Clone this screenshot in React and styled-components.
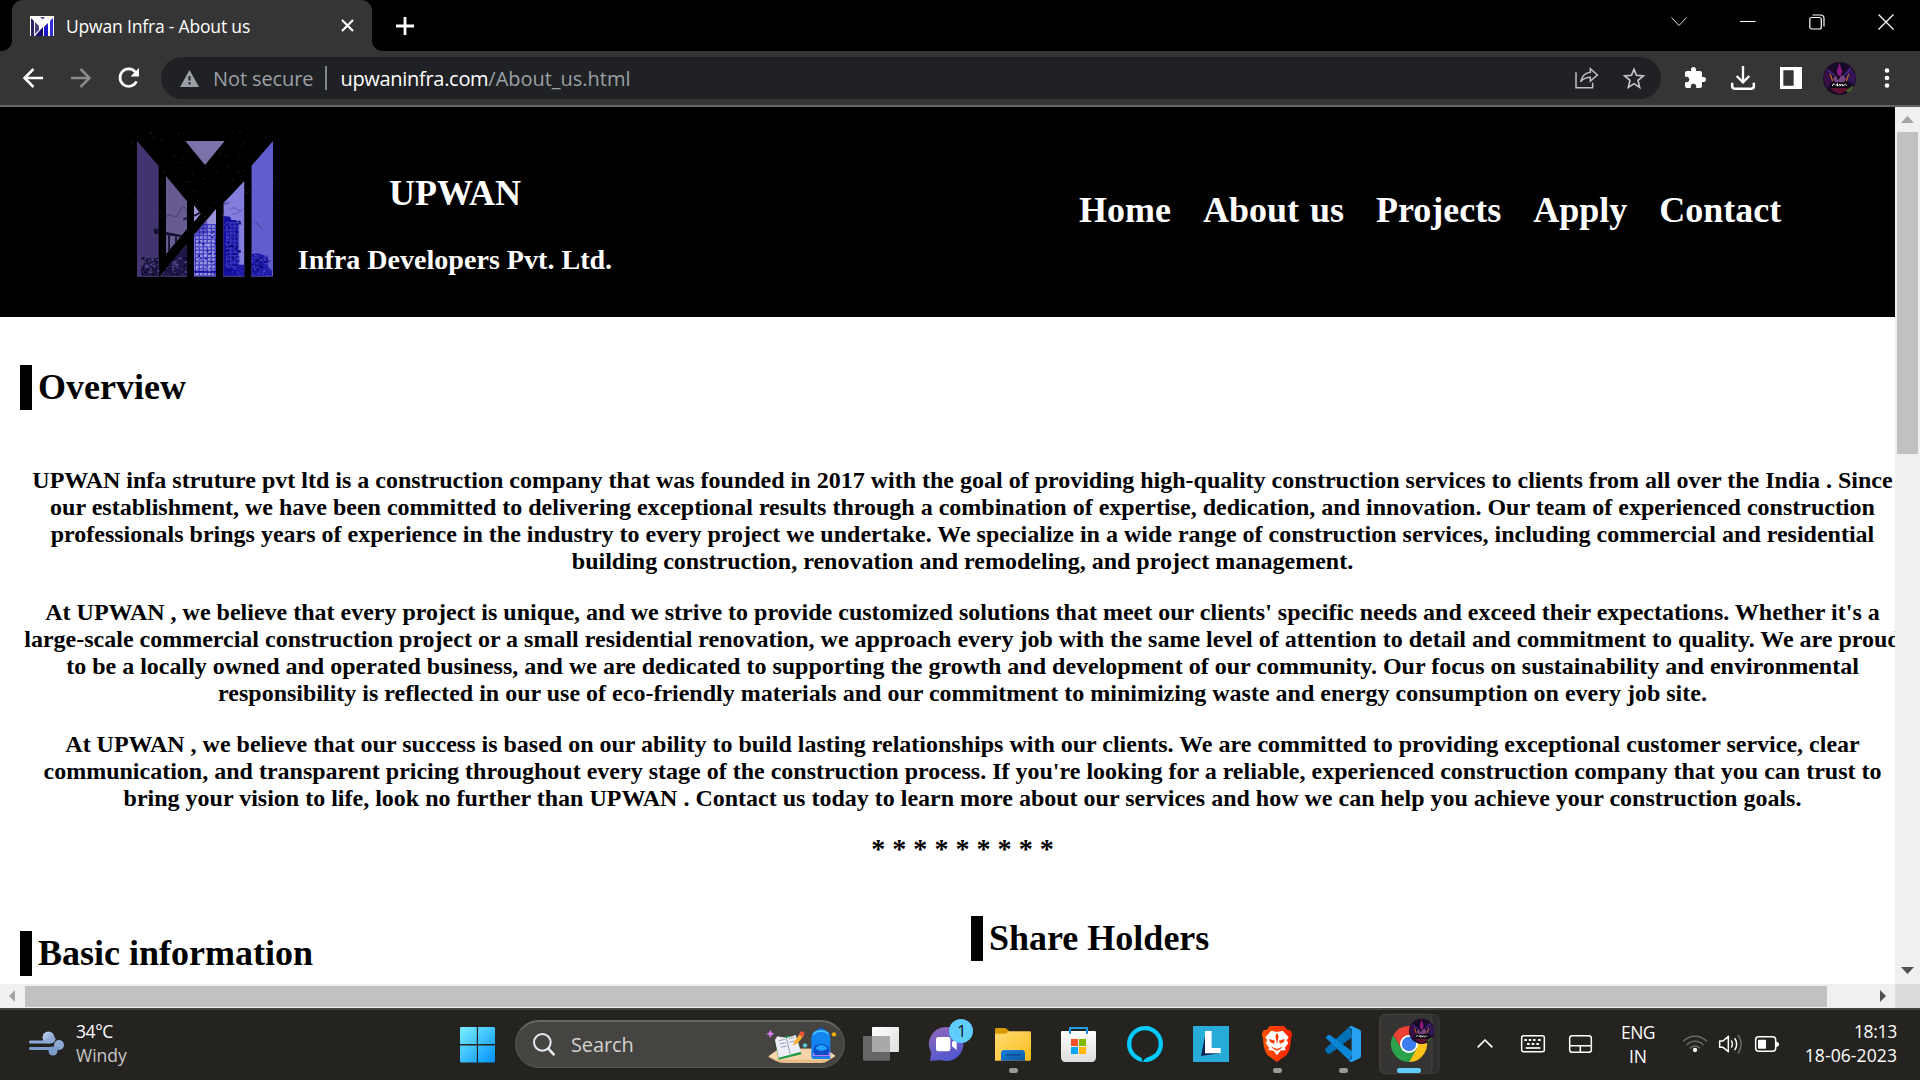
import React from "react";
import styled, { createGlobalStyle } from "styled-components";

const Global = createGlobalStyle`
  * { box-sizing: border-box; }
  html, body { margin: 0; padding: 0; background: #000; overflow: hidden; }
`;

const ui = `"Open Sans", "Noto Sans", sans-serif`;
const serif = `"Liberation Serif", "Times New Roman", serif`;

const Screen = styled.div`
  width: 1920px;
  height: 1080px;
  display: flex;
  flex-direction: column;
  overflow: hidden;
  font-family: ${ui};
`;

/* ---------- browser chrome ---------- */
const TabStrip = styled.div`
  height: 51px;
  flex: none;
  display: flex;
  background: #000;
  padding-left: 12px;
`;
const Tab = styled.div`
  position: relative;
  width: 360px;
  height: 51px;
  padding: 0 18px;
  border-radius: 11px 11px 0 0;
  background: #353535;
  display: flex;
  align-items: center;
  color: #fff;
  &::before, &::after {
    content: "";
    position: absolute;
    bottom: 0;
    width: 10px;
    height: 10px;
  }
  &::before { left: -10px; background: radial-gradient(circle at 0 0, transparent 9.5px, #353535 10px); }
  &::after { right: -10px; background: radial-gradient(circle at 100% 0, transparent 9.5px, #353535 10px); }
`;
const UiText = styled.span`
  font-family: ${ui};
  font-size: ${(p) => p.$size || 18}px;
  letter-spacing: ${(p) => p.$ls || 0}px;
  color: ${(p) => p.$color || "#fff"};
  margin-left: ${(p) => p.$ml || 0}px;
  padding-top: ${(p) => p.$pt || 0}px;
  line-height: ${(p) => p.$lh || 24}px;
  white-space: pre;
`;
const Icon = styled.svg`
  display: block;
  flex: none;
  overflow: visible;
  width: ${(p) => p.$w}px;
  height: ${(p) => p.$h}px;
  margin-left: ${(p) => p.$ml || 0}px;
  margin-top: ${(p) => p.$mt || 0}px;
`;
const WindowButtons = styled.div`
  margin-left: auto;
  display: flex;
  align-items: center;
  gap: 53px;
  height: 43px;
  padding-right: 26px;
`;
const Toolbar = styled.div`
  height: 56px;
  flex: none;
  display: flex;
  align-items: center;
  background: #353535;
  border-bottom: 2px solid #666;
  padding: 0 27px 0 22px;
`;
const AddressBar = styled.div`
  width: 1500px;
  height: 42px;
  margin-left: 21px;
  border-radius: 21px;
  background: #202124;
  display: flex;
  align-items: center;
  padding: 0 16px 0 18px;
`;
const Divider = styled.div`
  width: 2px;
  height: 24px;
  background: #80868b;
  margin: 0 13px 0 12px;
`;
const Push = styled.div`flex: 1;`;

/* ---------- page ---------- */
const Viewport = styled.div`
  height: 901px;
  flex: none;
  display: grid;
  grid-template-columns: 1895px 25px;
  grid-template-rows: 877px 24px;
  background: #dcdcdc;
`;
const Page = styled.div`
  overflow: hidden;
  background: #fff;
  color: #000;
  font-family: ${serif};
  font-weight: bold;
`;
const Header = styled.header`
  height: 210px;
  background: #000;
  color: #fff;
  display: flex;
  padding-left: 120px;
`;
const Brand = styled.div`
  width: 314px;
  margin-left: 8px;
  display: flex;
  flex-direction: column;
  align-items: center;
  padding-top: 66px;
  white-space: nowrap;
`;
const BrandName = styled.div`
  font-size: 36px;
  line-height: 41px;
`;
const BrandSub = styled.div`
  font-size: 28.08px;
  line-height: 32px;
  margin-top: 30px;
`;
const Nav = styled.nav`
  display: flex;
  margin-left: 467px;
  padding-top: 83px;
  gap: 32px;
  font-size: 36px;
  line-height: 41px;
  word-spacing: 2px;
  white-space: nowrap;
`;
const SectionTitle = styled.h2`
  margin: 0;
  height: 45px;
  border-left: 12px solid #000;
  padding-left: 6px;
  font-size: 36px;
  line-height: 45px;
  white-space: nowrap;
`;
const Overview = styled.section`
  padding: 48px 0 0 20px;
`;
const Story = styled.div`
  width: 1925px;
  margin-top: 57px;
  display: flex;
  flex-direction: column;
  align-items: center;
  gap: 24px;
`;
const Paragraph = styled.p`
  margin: 0;
  font-size: 24px;
  line-height: 27px;
  text-align: center;
  white-space: nowrap;
`;
const Stars = styled.div`
  font-size: 28.08px;
  line-height: 32px;
  margin-top: -3px;
`;
const Columns = styled.div`
  display: grid;
  grid-template-columns: 951px 1fr;
  padding: 51px 0 0 20px;
`;
const Column = styled.div`
  padding-top: ${(p) => p.$top || 0}px;
`;

/* ---------- scrollbars ---------- */
const VScroll = styled.div`
  background: #f0f0f0;
  display: flex;
  flex-direction: column;
  align-items: center;
  padding-right: 1px;
`;
const VThumb = styled.div`
  width: 21px;
  height: 322px;
  background: #c1c1c1;
  margin-top: 9px;
`;
const HScroll = styled.div`
  background: #f0f0f0;
  display: flex;
  align-items: center;
`;
const HThumb = styled.div`
  width: 1802px;
  height: 21px;
  background: #c1c1c1;
  margin-left: 10px;
`;

/* ---------- taskbar ---------- */
const Taskbar = styled.div`
  height: 72px;
  flex: none;
  display: flex;
  background: #252320;
  border-top: 2px solid #42433f;
`;
const Weather = styled.div`
  width: 432px;
  display: flex;
  padding-left: 29px;
`;
const TwoLines = styled.div`
  display: flex;
  flex-direction: column;
  align-items: ${(p) => p.$align || "flex-start"};
  margin-left: ${(p) => p.$ml || 0}px;
  width: ${(p) => (p.$w ? p.$w + "px" : "auto")};
  padding-top: ${(p) => p.$top || 9}px;
`;
const SearchBox = styled.div`
  width: 330px;
  height: 48px;
  margin: 10px 3px 0 20px;
  border-radius: 24px;
  background: #454441;
  border: 1px solid #555451;
  border-top: 2px solid #676663;
  display: flex;
  align-items: center;
  padding-left: 17px;
`;
const Apps = styled.div`
  display: flex;
`;
const Tray = styled.div`
  display: flex;
  flex: 1;
`;

const Cell = ({ x, w = 66, children }) => (
  <Icon $w={w} $h={70} viewBox={`${x} 30 ${w * 3} 210`}>{children}</Icon>
);
const TrayCell = ({ x, w, children }) => (
  <Icon $w={w} $h={70} viewBox={`${x} 150 ${w * 3} 210`} fill="none" stroke="#fff" strokeWidth="4.5" strokeLinecap="round" strokeLinejoin="round">
    {children}
  </Icon>
);

const rand = (seed) => {
  let s = seed;
  return () => (s = (s * 16807) % 2147483647) / 2147483647;
};
const specks = (() => {
  const r = rand(77);
  return Array.from({ length: 110 }, () => [34 + r() * 445, 32 + r() * 260, r() * 0.3 + 0.1]);
})();
const grain = (x0, y0, x1, y1, n, seed) => {
  const r = rand(seed);
  return Array.from({ length: n }, () => [x0 + r() * (x1 - x0), y0 + r() * (y1 - y0), 3 + r() * 6, 2 + r() * 4]);
};

function Logo() {
  const tower = (x, top, w, bottom, color, key) => {
    const rows = [];
    for (let y = top; y < bottom; y += 11) rows.push(<rect key={key + y} x={x} y={y} width={w} height="4" fill={color} />);
    for (let c = x; c < x + w; c += 12) rows.push(<rect key={key + "c" + c} x={c} y={top} width="4" height={bottom - top} fill={color} />);
    return rows;
  };
  return (
    <Icon $w={170} $h={170} $mt={13} viewBox="0 0 510 510">
      <defs>
        <clipPath id="panes">
          <path d="M51 63L116 138V470H51ZM138 168L201 244V327L138 402ZM201 371V470H119ZM222 256L242 282L222 305ZM288 267V470H222V345ZM310 250L373 183V470H310ZM394 138L459 63V470H394ZM96 470L118 440V470Z" />
        </clipPath>
      </defs>
      {specks.map(([x, y, o], i) => <rect key={i} x={x} y={y} width="3" height="3" fill="#9a9aa8" opacity={o} />)}
      <path d="M196 63H314L255 135Z" fill="#7a72a8" />
      <g clipPath="url(#panes)">
        <rect x="51" y="60" width="66" height="410" fill="#42356f" />
        <rect x="138" y="160" width="64" height="310" fill="#685b91" />
        <rect x="222" y="250" width="67" height="220" fill="#9a94da" />
        <rect x="310" y="180" width="64" height="290" fill="#837ddb" />
        <rect x="394" y="60" width="66" height="410" fill="#625dce" />
        <path d="M138 290Q150 280 160 289T180 272T200 274M405 305L426 326M312 252L328 248" fill="none" stroke="#39326f" strokeWidth="2.5" />
        <path d="M330 270Q340 258 352 268T368 265M334 282Q350 286 360 274" fill="none" stroke="#544fb8" strokeWidth="2.5" />
        <path d="M100 326H118V342H104ZM138 336L200 348V354L138 345Z" fill="#151032" />
        <path d="M147 345V400M168 350V390M190 298L230 284L240 278" stroke="#1e173c" strokeWidth="6" />
        <path d="M62 450L80 414H116V470H66Z" fill="#211847" />
        <path d="M119 470V440L138 425L160 415L201 371V470Z" fill="#1d1748" />
        <g opacity="0.75">{tower(224, 312, 66, 470, "#2824bc", "a")}</g>
        <path d="M222 330L245 312L262 300V340L222 350Z" fill="#15109a" opacity="0.4" />
        <path d="M310 288L330 290L334 300H348L356 312V470H310Z" fill="#1510a0" />
        <g opacity="0.5">{tower(318, 306, 38, 440, "#5b57d0", "b")}</g>
        <rect x="350" y="434" width="24" height="36" fill="#2019a8" />
        <path d="M394 402L415 400L444 410V440L456 452V470H394Z" fill="#211caa" />
        <rect x="222" y="452" width="66" height="6" fill="#1a14a6" />
        {grain(64, 410, 201, 466, 90, 5).map(([x, y, w, h], i) => <rect key={i} x={x} y={y} width={w} height={h} fill={i % 2 ? "#54488a" : "#0a0620"} />)}
        {grain(222, 330, 288, 466, 50, 31).map(([x, y, w, h], i) => <rect key={i} x={x} y={y} width={w} height={h} fill={i % 2 ? "#1b16a4" : "#a9a4ea"} />)}
        {grain(310, 300, 356, 466, 70, 9).map(([x, y, w, h], i) => <rect key={i} x={x} y={y} width={w} height={h} fill={i % 2 ? "#0a0670" : "#3c36c4"} />)}
        {grain(394, 404, 444, 466, 50, 15).map(([x, y, w, h], i) => <rect key={i} x={x} y={y} width={w} height={h} fill={i % 2 ? "#0b0775" : "#4a45c8"} />)}
        <path d="M51 469H459" stroke="#5a5490" strokeWidth="3" />
      </g>
    </Icon>
  );
}

const AvatarArt = ({ cx, cy, r, id }) => (
  <g>
    <clipPath id={id}><circle cx={cx} cy={cy} r={r} /></clipPath>
    <g clipPath={`url(#${id})`}>
      <g transform={`translate(${cx} ${cy}) scale(${r / 50})`}>
        <rect x="-50" y="-50" width="100" height="100" fill="#180a28" />
        <path d="M-50 -10L-34 -30L-20 10L-40 30Z" fill="#3a0f44" />
        <path d="M50 -10L30 -36L18 0L44 20Z" fill="#331556" />
        <path d="M-8 -22L0 -48L8 -22L3 -8H-4Z" fill="#8c1a80" />
        <path d="M-36 -26L-16 -10M34 -30L14 -10" stroke="#45258c" strokeWidth="5" />
        <path d="M-28 -14L-21 8M28 -14L21 8" stroke="#c86e1e" strokeWidth="3.500" />
        <path d="M-20 2L-12 -10L-4 6L4 -8L12 -10L20 2L12 12H-12Z" fill="#7a4580" />
        <path d="M-30 32L0 48L30 32L10 26H-10Z" fill="#5e1030" />
        <path d="M20 36L40 22L46 34L28 46Z" fill="#3f6420" />
        <rect x="-26" y="11" width="52" height="18" rx="4" fill="#08030c" />
        <path d="M-22 23Q-20 13 -14 17M-12 23L-6 15L-6 23L2 17V23L8 17L10 23L18 17L22 22" stroke="#eee" strokeWidth="3" fill="none" />
      </g>
    </g>
  </g>
);

function Chrome() {
  return (
    <>
      <TabStrip>
        <Tab>
          <Icon $w={24} $h={20} viewBox="0 0 24 20">
            <rect width="24" height="20" fill="#fff" />
            <path d="M1 2L4 5V20H1Z" fill="#2b1f66" />
            <path d="M5 6L9 10V14L5 18Z" fill="#4a3f7c" />
            <path d="M5 20L13 11V20Z" fill="#140c70" />
            <path d="M14 11L18 7V20H14Z" fill="#1d15c8" />
            <path d="M20 5L23 2V20H20Z" fill="#342ed0" />
            <path d="M10 1H15L12.500 3.500Z" fill="#554c9c" />
          </Icon>
          <UiText $size={17.5} $ls={-0.18} $ml={12}>Upwan Infra - About us</UiText>
          <Push />
          <Icon $w={13} $h={13} viewBox="0 0 13 13" stroke="#fff" strokeWidth="2.200"><path d="M1 1L12 12M12 1L1 12" /></Icon>
        </Tab>
        <Icon $w={18} $h={18} $ml={24} $mt={17} viewBox="0 0 18 18" stroke="#fff" strokeWidth="2.800"><path d="M9 0V18M0 9H18" /></Icon>
        <WindowButtons>
          <Icon $w={16} $h={10} viewBox="0 0 16 10" fill="none" stroke="#ddd" strokeWidth="1"><path d="M.5 .5L8 8.500L15.500 .5" /></Icon>
          <Icon $w={16} $h={16} viewBox="0 0 16 16" stroke="#fff" strokeWidth="1.100"><path d="M0 7.500H15.500" /></Icon>
          <Icon $w={16} $h={16} viewBox="0 0 16 16" fill="none" stroke="#fff" strokeWidth="1.200">
            <rect x=".8" y="3.500" width="11.500" height="11.500" rx="2" /><path d="M3.500 1H11.500Q15 1 15 4.500V12.500" />
          </Icon>
          <Icon $w={16} $h={16} viewBox="0 0 16 16" stroke="#fff" strokeWidth="1.200"><path d="M.5 .5L15.500 15.500M15.500 .5L.5 15.500" /></Icon>
        </WindowButtons>
      </TabStrip>
      <Toolbar>
        <Icon $w={21} $h={20} viewBox="0 0 21 20" fill="none" stroke="#fff" strokeWidth="2.500"><path d="M21 10H2.500M11.500 1L2.500 10L11.500 19" /></Icon>
        <Icon $w={21} $h={20} $ml={28} viewBox="0 0 21 20" fill="none" stroke="#8a8a8a" strokeWidth="2.500"><path d="M0 10H18.500M9.500 1L18.500 10L9.500 19" /></Icon>
        <Icon $w={22} $h={22} $ml={26} viewBox="0 0 22 22" fill="none" stroke="#fff" strokeWidth="2.700">
          <path d="M18.500 14.500A8.700 8.700 0 1 1 17.500 5.200L19.500 7.500" /><path d="M21 1V9.500H12.500Z" fill="#fff" stroke="none" />
        </Icon>
        <AddressBar style={undefined}>
          <Icon $w={19} $h={17} $ml={1} viewBox="0 0 19 17"><path d="M9.500 0L19 17H0Z" fill="#9aa0a6" /><path d="M8.500 6H10.500V10.500H8.500ZM8.500 12.300H10.500V14.500H8.500Z" fill="#202124" /></Icon>
          <UiText $size={20} $ls={-0.1} $ml={14} $pt={1} $color="#9aa0a6">Not secure</UiText>
          <Divider />
          <UiText $size={20} $ls={-0.3} $pt={1}>upwaninfra.com</UiText>
          <UiText $size={20} $ls={-0.02} $pt={1} $color="#9aa0a6">/About_us.html</UiText>
          <Push />
          <Icon $w={24} $h={22} viewBox="167 203 72 66" fill="none" stroke="#bdbfc1" strokeWidth="4.500">
            <path d="M170 219V265H220V250" /><path d="M184 247C188 230 196 221 213 219V208L234 227L213 245V234C200 234 192 238 184 247Z" />
          </Icon>
          <Icon $w={22} $h={22} $ml={24} viewBox="313 201 64 66" fill="none" stroke="#c4c6c8" strokeWidth="5"><path d="M345 208L352.500 226L373 228L357 241L362 262L345 251L328 262L333 241L317 228L337.500 226Z" /></Icon>
        </AddressBar>
        <Icon $w={24} $h={24} $ml={22} viewBox="0 0 24 24" fill="#fff"><path d="M20.500 11H19V7c0-1.100-.9-2-2-2h-4V3.500a2.500 2.500 0 0 0-5 0V5H4c-1.100 0-2 .9-2 2v3.800h1.500a2.700 2.700 0 0 1 0 5.400H2V20c0 1.100.9 2 2 2h3.800v-1.500a2.700 2.700 0 0 1 5.400 0V22H17c1.100 0 2-.9 2-2v-4h1.500a2.500 2.500 0 0 0 0-5z" /></Icon>
        <Icon $w={24} $h={24} $ml={24} viewBox="633 198 72 72" fill="none" stroke="#fff" strokeWidth="7"><path d="M669 198V245M650 228L669 247L688 228" /><path d="M636.500 248V259Q636.500 266 644 266H694Q701.500 266 701.500 259V248" strokeWidth="7.500" /></Icon>
        <Icon $w={22} $h={22} $ml={25} viewBox="780 201 66 66"><path d="M780 201H846V267H780ZM790 211V257H821V211Z" fill="#fff" fillRule="evenodd" /></Icon>
        <Icon $w={33} $h={33} $ml={21} viewBox="0 0 100 100"><AvatarArt cx={50} cy={50} r={50} id="av1" /></Icon>
        <Icon $w={6} $h={20} $ml={28} viewBox="0 0 6 20" fill="#fff"><circle cx="3" cy="2.500" r="2.300" /><circle cx="3" cy="10" r="2.300" /><circle cx="3" cy="17.500" r="2.300" /></Icon>
      </Toolbar>
    </>
  );
}

function Website() {
  return (
    <Page>
      <Header>
        <Logo />
        <Brand>
          <BrandName>UPWAN</BrandName>
          <BrandSub>Infra Developers Pvt. Ltd.</BrandSub>
        </Brand>
        <Nav>
          <span>Home</span><span>About us</span><span>Projects</span><span>Apply</span><span>Contact</span>
        </Nav>
      </Header>
      <Overview>
        <SectionTitle>Overview</SectionTitle>
      </Overview>
      <Story>
        <Paragraph>
          UPWAN infa struture pvt ltd is a construction company that was founded in 2017 with the goal of providing high-quality construction services to clients from all over the India . Since<br />
          our establishment, we have been committed to delivering exceptional results through a combination of expertise, dedication, and innovation. Our team of experienced construction<br />
          professionals brings years of experience in the industry to every project we undertake. We specialize in a wide range of construction services, including commercial and residential<br />
          building construction, renovation and remodeling, and project management.
        </Paragraph>
        <Paragraph>
          At UPWAN , we believe that every project is unique, and we strive to provide customized solutions that meet our clients' specific needs and exceed their expectations. Whether it's a<br />
          large-scale commercial construction project or a small residential renovation, we approach every job with the same level of attention to detail and commitment to quality. We are proud<br />
          to be a locally owned and operated business, and we are dedicated to supporting the growth and development of our community. Our focus on sustainability and environmental<br />
          responsibility is reflected in our use of eco-friendly materials and our commitment to minimizing waste and energy consumption on every job site.
        </Paragraph>
        <Paragraph>
          At UPWAN , we believe that our success is based on our ability to build lasting relationships with our clients. We are committed to providing exceptional customer service, clear<br />
          communication, and transparent pricing throughout every stage of the construction process. If you're looking for a reliable, experienced construction company that you can trust to<br />
          bring your vision to life, look no further than UPWAN . Contact us today to learn more about our services and how we can help you achieve your construction goals.
        </Paragraph>
        <Stars>* * * * * * * * *</Stars>
      </Story>
      <Columns>
        <Column $top={15}><SectionTitle>Basic information</SectionTitle></Column>
        <Column><SectionTitle>Share Holders</SectionTitle></Column>
      </Columns>
    </Page>
  );
}

function TaskbarApps() {
  return (
    <Apps>
      <Cell x={1044}>
        <defs><linearGradient id="tv" x2="1" y2="1"><stop stopColor="#fff" /><stop offset="1" stopColor="#dedede" /></linearGradient></defs>
        <rect x="1116" y="81" width="81" height="75" rx="3" fill="url(#tv)" />
        <rect x="1089" y="108" width="81" height="74" rx="3" fill="#6d6d6c" opacity=".92" />
        <path d="M1116 108H1170V156H1119Q1116 156 1116 153Z" fill="#a9a9a9" />
      </Cell>
      <Cell x={1242}>
        <defs><linearGradient id="ch" x2=".4" y2="1"><stop stopColor="#9169b8" /><stop offset="1" stopColor="#5558cf" /></linearGradient></defs>
        <path d="M1338 81A51 51 0 1 1 1322 180L1290 183L1294 158A51 51 0 0 1 1338 81Z" fill="url(#ch)" />
        <rect x="1308" y="111" width="43" height="43" rx="7" fill="#fff" />
        <path d="M1356 126L1370 116V150L1356 139Z" fill="#fff" />
        <circle cx="1383" cy="93" r="36" fill="#60cdff" />
        <text x="1385" y="110" fontSize="50" textAnchor="middle" fill="#111" fontFamily='"Open Sans", sans-serif'>1</text>
      </Cell>
      <Cell x={60}>
        <defs>
          <linearGradient id="fo" x2="1" y2="1"><stop stopColor="#ffdc73" /><stop offset="1" stopColor="#fbbc1c" /></linearGradient>
          <linearGradient id="fb" x2="1" y2="1"><stop stopColor="#1781dd" /><stop offset="1" stopColor="#1056a0" /></linearGradient>
        </defs>
        <path d="M105 88Q105 84 109 84H136L148 93V104H105Z" fill="#d99a00" />
        <path d="M105 101H136L148 94H209Q213 94 213 98V178Q213 182 209 182H105Z" fill="url(#fo)" />
        <path d="M123 182V160Q123 150 133 150H185Q195 150 195 160V182Z" fill="url(#fb)" />
        <path d="M139 165H179" stroke="#0d4a8c" strokeWidth="4" strokeLinecap="round" />
        <rect x="147" y="204" width="27" height="15" rx="7" fill="#9b9a98" />
      </Cell>
      <Cell x={258}>
        <defs><linearGradient id="st" x2="0" y2="1"><stop stopColor="#fff" /><stop offset="1" stopColor="#dcdcdc" /></linearGradient></defs>
        <path d="M330 100V84H381V100" fill="none" stroke="#1fa0e4" strokeWidth="6" />
        <path d="M303 97Q303 93 307 93H404Q408 93 408 97V172Q408 186 394 186H317Q303 186 303 172Z" fill="url(#st)" />
        <path d="M330 93V101M381 93V101" stroke="#1583cc" strokeWidth="6" />
        <rect x="333" y="117" width="21" height="21" fill="#f25022" /><rect x="357" y="117" width="21" height="21" fill="#7fba00" />
        <rect x="333" y="141" width="21" height="21" fill="#00a4ef" /><rect x="357" y="141" width="21" height="21" fill="#ffb900" />
      </Cell>
      <Cell x={456}>
        <circle cx="555" cy="132" r="54" fill="#00caff" />
        <circle cx="555" cy="132" r="41" fill="#252320" />
        <path d="M532 164Q547 170 547 184L549 186L566 171L560 150H535Z" fill="#252320" />
        <path d="M549 186Q551 177 560 173Q572 170 582 162L596 166Q580 186 549 186Z" fill="#00caff" />
      </Cell>
      <Cell x={654}>
        <rect x="699" y="78" width="108" height="108" fill="#27acd9" />
        <path d="M738 94L723 168L780 160L738 150Z" fill="#0a2350" />
        <path d="M735 93H755V144H782V160H735Z" fill="#fff" />
      </Cell>
      <Cell x={852}>
        <defs><linearGradient id="br"><stop stopColor="#ff5500" /><stop offset="1" stopColor="#ff2000" /></linearGradient></defs>
        <path d="M930 78H972L982 89L992 91L997 104L993 114Q992 150 979 166L951 186L923 166Q910 150 909 114L905 104L910 91L920 89Z" fill="url(#br)" />
        <path d="M934 92L951 96L968 92L986 112L980 121L985 129L974 144L978 150L962 152L951 166L940 152L924 150L928 144L917 129L922 121L916 112Z" fill="#fff" />
        <path d="M928 117L945 122L942 131L930 126ZM974 117L957 122L960 131L972 126ZM951 98L956 108L951 132L946 108ZM931 139L951 147L971 139L960 148L951 152L942 148Z" fill="#ff3b00" />
        <rect x="939" y="204" width="27" height="15" rx="7" fill="#9b9a98" />
      </Cell>
      <Cell x={1050}>
        <path d="M1170 79L1176 112L1110 161Q1104 163 1100 158L1096 152Q1094 148 1098 144Z" fill="#0070b8" />
        <path d="M1097 113L1103 106Q1107 103 1111 106L1178 155L1170 184Z" fill="#0a86d4" />
        <path d="M1168 80Q1172 76 1177 79L1199 89Q1203 91 1203 95V169Q1203 173 1199 175L1177 185Q1172 188 1168 184L1175 176V88Z" fill="#27a2f2" />
        <rect x="1137" y="204" width="27" height="15" rx="7" fill="#9b9a98" />
      </Cell>
      <Cell x={1248}>
        <path d="M1410 43H1418Q1437 43 1437 62V202Q1437 221 1418 221H1410" fill="#302e2c" stroke="#42413f" strokeWidth="3" />
        <rect x="1259" y="43" width="157" height="178" rx="16" fill="#363432" stroke="#454442" strokeWidth="3" />
        <path d="M1347 132L1300.200 105A54 54 0 0 1 1393.800 105Z" fill="#ea4335" />
        <path d="M1347 105H1393.800A54 54 0 0 1 1347 186L1370 145Z" fill="#fbc116" />
        <path d="M1300.200 105A54 54 0 0 0 1347 186L1370.400 145.500H1323.600Z" fill="#2ba24c" />
        <path d="M1300.200 105H1347V120L1324 145Z" fill="#ea4335" />
        <circle cx="1347" cy="132" r="27" fill="#fff" /><circle cx="1347" cy="132" r="21.500" fill="#3b7ded" />
        <AvatarArt cx={1385} cy={94} r={38} id="av2" />
        <rect x="1311" y="204" width="72" height="15" rx="7.500" fill="#60cdff" />
      </Cell>
    </Apps>
  );
}

function BottomBar() {
  return (
    <Taskbar>
      <Weather>
        <Icon $w={36} $h={25} $mt={21} viewBox="0 0 36 25">
          <defs><linearGradient id="wi" x2="1" y2="1"><stop stopColor="#c9d9f5" /><stop offset="1" stopColor="#6d8fc0" /></linearGradient></defs>
          <circle cx="19.500" cy="6.500" r="6" fill="url(#wi)" /><circle cx="30" cy="14" r="5" fill="#8fabd4" /><circle cx="24" cy="20" r="4.500" fill="#7d9dcb" />
          <path d="M1.500 11H21Q24 11 25 8" stroke="#8eabd8" strokeWidth="3.200" fill="none" strokeLinecap="round" />
          <path d="M1.500 17.500H30" stroke="#7c9cce" strokeWidth="3.200" strokeLinecap="round" />
          <path d="M1 14.200H23" stroke="#252320" strokeWidth="1.600" />
        </Icon>
        <TwoLines $ml={11}>
          <UiText $size={17.5} $ls={-0.4}>34°C</UiText>
          <UiText $size={17.5} $ls={0} $color="#c8c7c6">Windy</UiText>
        </TwoLines>
      </Weather>
      <Icon $w={35} $h={36} $ml={28} $mt={17} viewBox="0 0 35 36">
        <defs><linearGradient id="wn" gradientUnits="userSpaceOnUse" x1="0" y1="0" x2="35" y2="36"><stop stopColor="#7bf0ff" /><stop offset="1" stopColor="#0090fb" /></linearGradient></defs>
        <path d="M1 0H16.800V17H0V1ZM18 0H34L35 1V17H18ZM0 18.500H16.800V35.500H1L0 34.500ZM18 18.500H35V34.500L34 35.500H18Z" fill="url(#wn)" />
      </Icon>
      <SearchBox>
        <Icon $w={22} $h={23} viewBox="99 98 66 69" fill="none" stroke="#e4eaee"><circle cx="127" cy="126" r="25" strokeWidth="6" /><path d="M145 145L161 162" strokeWidth="8" strokeLinecap="round" /></Icon>
        <UiText $size={20} $ls={-0.1} $ml={16} $color="#d2d1d0">Search</UiText>
        <Icon $w={72} $h={36} $ml={132} viewBox="800 84 216 108">
          <path d="M807 174L835 152Q840 149 850 149H970Q980 149 1008 172L985 186Q978 192 965 192H855Q840 192 830 186Z" fill="#e8bc8b" />
          <path d="M807 172L835 152Q840 149 850 149H970Q980 149 1008 170L985 182H832Z" fill="#f6d3a9" />
          <path d="M827 124L866 110L893 116L906 166L838 182Z" fill="#1f9a45" />
          <path d="M827 122L834 112L862 117L889 108L905 158L872 167L838 176Z" fill="#eeeef8" />
          <path d="M861 117L873 166" stroke="#9a9ab4" strokeWidth="3" /><path d="M838 125L857 121M841 135L859 131M844 145L862 141M869 119L885 115M871 130L886 126" stroke="#8d8da8" strokeWidth="2.500" />
          <path d="M880 140L886 125L904 102L914 109L896 132Z" fill="#f9b134" /><path d="M898 107L905 97Q912 95 916 103L910 114Z" fill="#f4513b" />
          <path d="M955 94Q965 80 975 94" fill="none" stroke="#0c5bb8" strokeWidth="5" />
          <path d="M936 118Q936 92 965 91Q993 92 993 118V180H940Q936 178 936 172Z" fill="#1285f0" />
          <path d="M942 108Q948 96 965 96Q980 96 987 106" stroke="#56c7ff" strokeWidth="4" fill="none" />
          <path d="M942 150Q945 135 966 135Q986 135 990 150V173H942Z" fill="#0b4fc8" /><path d="M949 149Q953 138 966 138Q980 138 984 150L966 156Z" fill="#22a4ff" />
          <path d="M943 162V170H990V160" stroke="#b77bff" strokeWidth="4" fill="none" />
          <path d="M813 92L817 101L826 104L817 108L813 117L809 108L801 104L809 101Z" fill="#dd7cf7" />
          <circle cx="917" cy="139" r="6.500" fill="#59c9d8" /><circle cx="1004" cy="106" r="6.500" fill="#fbb00f" />
        </Icon>
      </SearchBox>
      <TaskbarApps />
      <Tray>
        <TrayCell x={6} w={66}><path d="M113 262L135 240L157 262" strokeWidth="5" strokeLinecap="butt" /></TrayCell>
        <TrayCell x={204} w={50}>
          <rect x="245" y="227" width="68" height="48" rx="6" />
          <path d="M256 240H258M269 240H271M282 240H284M297 240H299M264 252H266M278 252H280M292 252H294" strokeWidth="5.500" strokeLinecap="square" /><path d="M257 264H301" strokeLinecap="butt" strokeWidth="5" />
        </TrayCell>
        <TrayCell x={354} w={50}><rect x="389" y="227" width="65" height="50" rx="8" /><path d="M389 257H454M421 257V277" /></TrayCell>
        <TwoLines $align="center" $w={60} $top={10}>
          <UiText $size={17.5} $ls={-0.5}>ENG</UiText>
          <UiText $size={17.5}>IN</UiText>
        </TwoLines>
        <TrayCell x={684} w={46}>
          <path d="M731 243A47 47 0 0 1 799 243M741 254A33 33 0 0 1 789 254M751 264A20 20 0 0 1 779 264" stroke="#6b6a68" /><circle cx="765" cy="270" r="6.500" fill="#fff" stroke="none" />
        </TrayCell>
        <TrayCell x={822} w={37}>
          <path d="M839 243H849L865 229V275L849 262H839Z" /><path d="M875 243Q880 252 875 261M885 236Q895 252 885 269" /><path d="M895 226Q912 252 895 279" stroke="#6b6a68" />
        </TrayCell>
        <TrayCell x={933} w={40}>
          <rect x="947" y="230" width="60" height="44" rx="9" /><path d="M1008 246L1015 249V257L1008 260Z" fill="#fff" strokeWidth="3" /><rect x="954" y="239" width="24" height="27" rx="2" fill="#fff" stroke="none" />
        </TrayCell>
        <TwoLines $align="flex-end" $w={107} $ml={-1}>
          <UiText $size={17.5} $ls={-0.3}>18:13</UiText>
          <UiText $size={17.5} $ls={0.1}>18-06-2023</UiText>
        </TwoLines>
      </Tray>
    </Taskbar>
  );
}

export default function App() {
  return (
    <Screen>
      <Global />
      <Chrome />
      <Viewport>
        <Website />
        <VScroll>
          <Icon $w={13} $h={7} $mt={9} viewBox="0 0 13 7"><path d="M6.500 0L13 7H0Z" fill="#a3a3a3" /></Icon>
          <VThumb />
          <Push />
          <Icon $w={13} $h={7} viewBox="0 0 13 7"><path d="M0 0H13L6.500 7Z" fill="#505050" /></Icon>
          <Icon $w={1} $h={10} viewBox="0 0 1 10" />
        </VScroll>
        <HScroll>
          <Icon $w={6} $h={12} $ml={9} viewBox="0 0 6 12"><path d="M6 0V12L0 6Z" fill="#a3a3a3" /></Icon>
          <HThumb />
          <Icon $w={6} $h={12} $ml={53} viewBox="0 0 6 12"><path d="M0 0V12L6 6Z" fill="#505050" /></Icon>
        </HScroll>
      </Viewport>
      <BottomBar />
    </Screen>
  );
}
